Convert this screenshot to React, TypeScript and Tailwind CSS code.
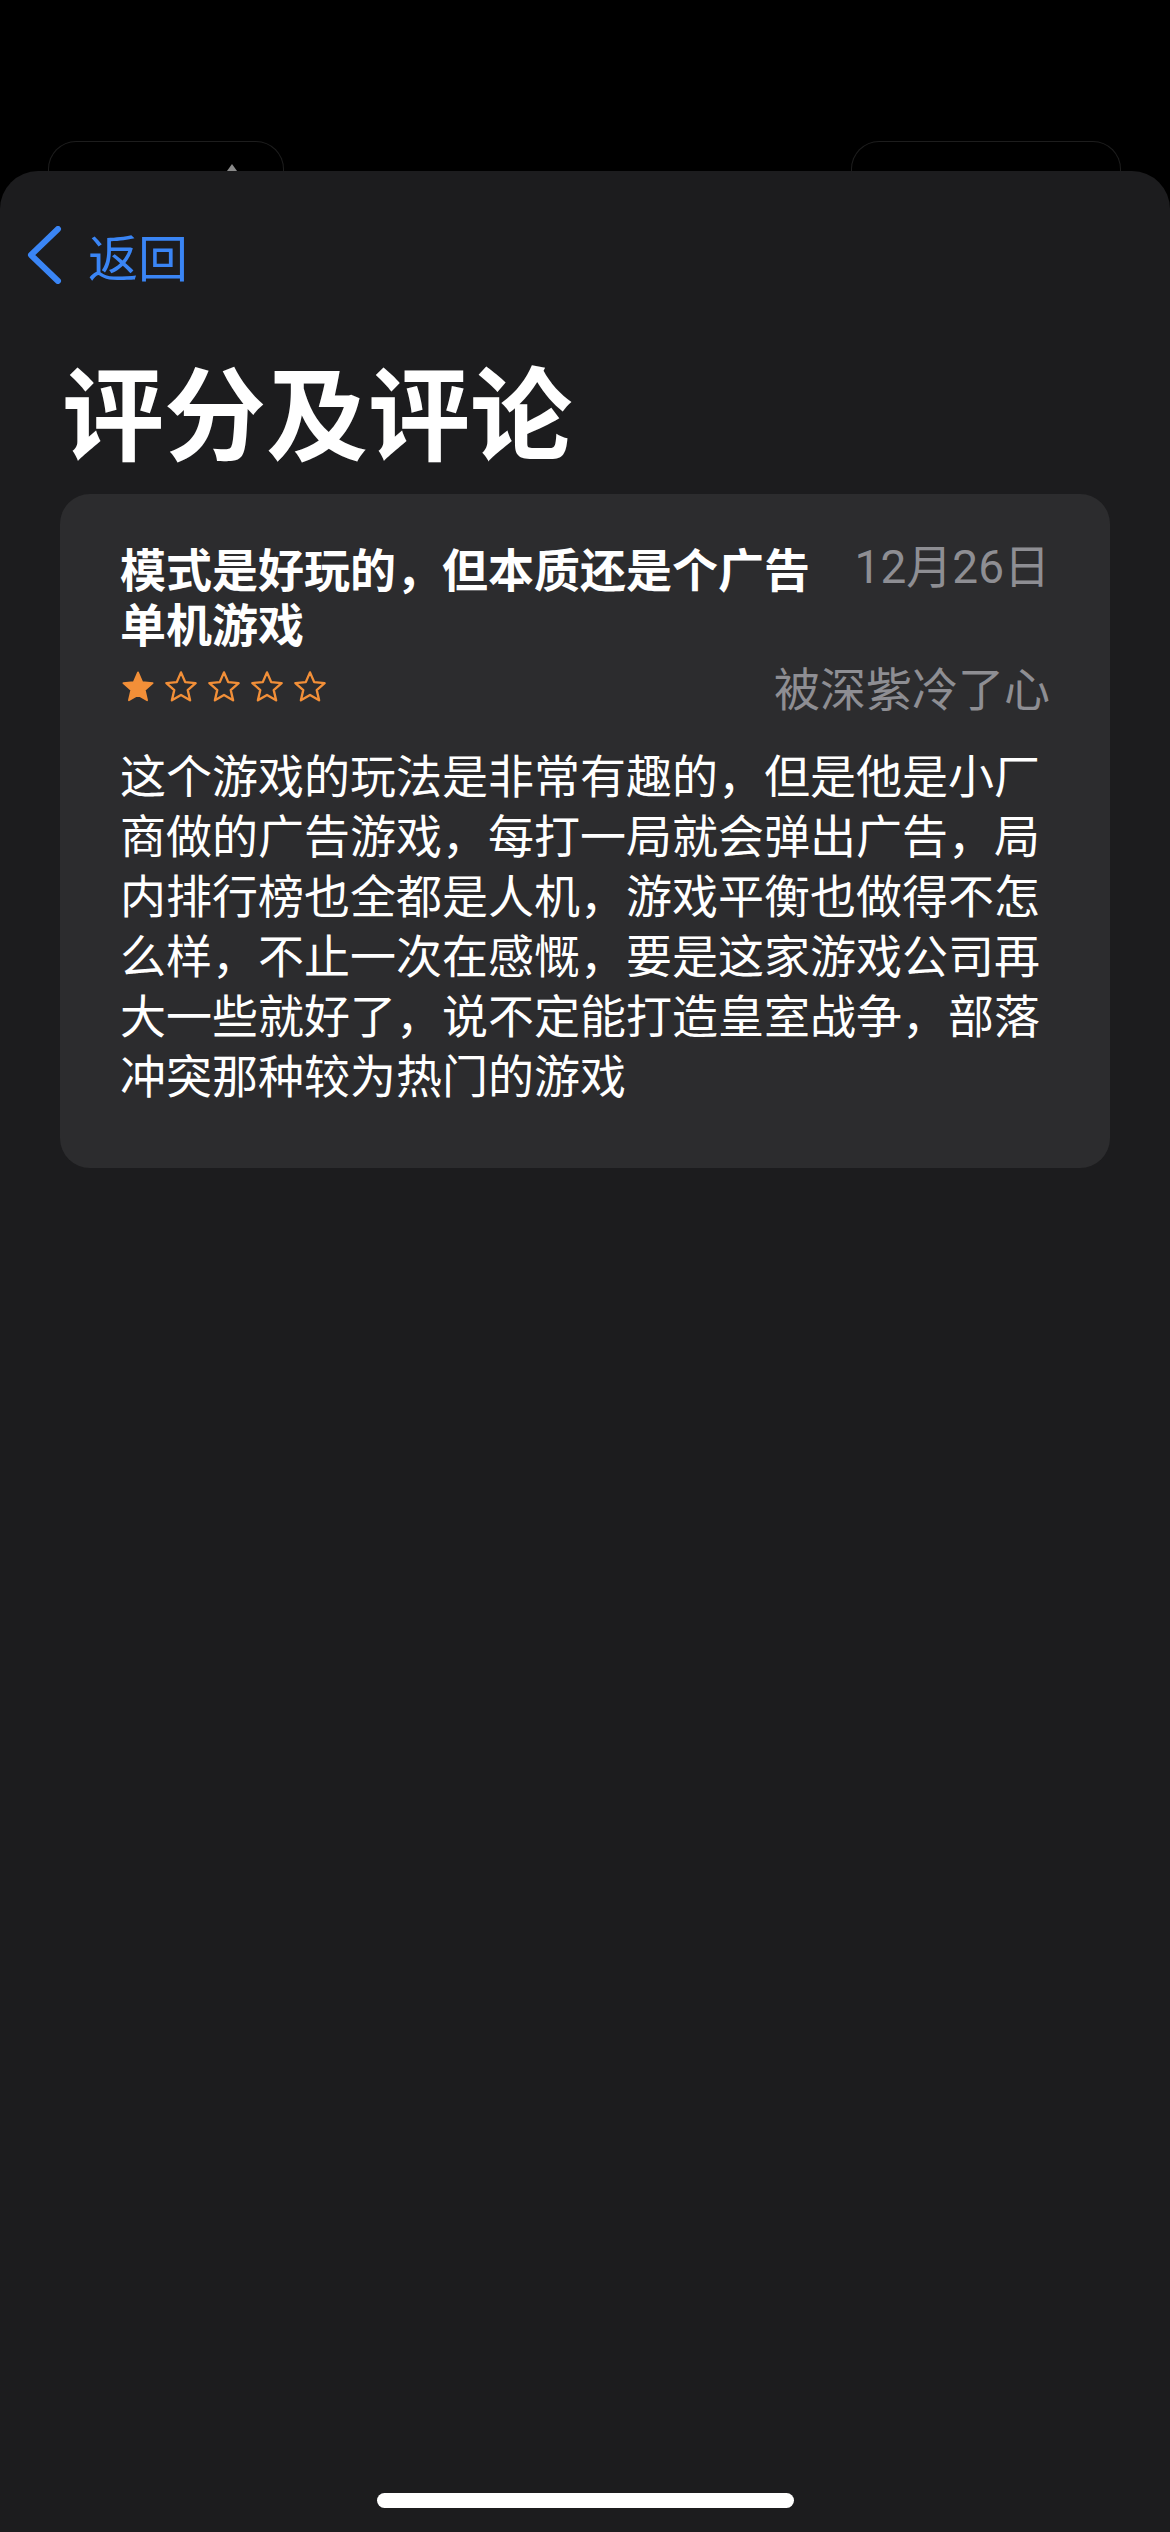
import React from "react";

const cjk = { fontFamily: '"Noto Sans CJK SC", "Noto Sans", sans-serif' };
const dateFont = { fontFamily: 'Roboto, "Noto Sans CJK SC", sans-serif' };

function Star({ filled }: { filled: boolean }) {
  return (
    <svg width="36" height="34" viewBox="0 0 24 23" className="shrink-0">
      <polygon
        points="12,1.6 14.85,8.2 21.9,8.85 16.55,13.55 18.15,20.5 12,16.85 5.85,20.5 7.45,13.55 2.1,8.85 9.15,8.2"
        fill={filled ? "#f28f38" : "none"}
        stroke="#f28f38"
        strokeWidth={filled ? 1.2 : 1.6}
        strokeLinejoin="round"
      />
    </svg>
  );
}

export default function App() {
  return (
    <div className="w-[1170px] h-[2532px] bg-black flex flex-col overflow-hidden" style={cjk}>
      {/* background buttons peeking behind the sheet */}
      <div className="h-[171px] pt-[141px] pl-[48px] pr-[49px] flex justify-between shrink-0">
        <div className="relative w-[236px] h-[30px] border-t-[1.5px] border-l-[1.5px] border-r-[1.5px] border-[#1d1d1d] rounded-t-[28px]">
          <div className="absolute left-[178px] top-[22px] w-0 h-0 border-l-[5px] border-r-[5px] border-b-[7px] border-l-transparent border-r-transparent border-b-[#8a8a8a]" />
        </div>
        <div className="w-[270px] h-[30px] border-t-[1.5px] border-l-[1.5px] border-r-[1.5px] border-[#1d1d1d] rounded-t-[28px]" />
      </div>

      {/* sheet */}
      <div className="flex-1 bg-[#1c1c1e] rounded-t-[38px] flex flex-col pt-[54px] pb-[24px]">
        {/* back */}
        <div className="h-[60px] flex items-center pl-[27px]">
          <svg width="36" height="58" viewBox="0 0 36 58" className="shrink-0">
            <polyline
              points="31,3 4,29 31,55"
              fill="none"
              stroke="#3a85f5"
              strokeWidth="6"
              strokeLinecap="round"
              strokeLinejoin="round"
            />
          </svg>
          <span className="ml-[25px] text-[50px] leading-[60px] text-[#3a85f5]">返回</span>
        </div>

        {/* title */}
        <h1 className="mt-[63px] pl-[62px] text-[102px] leading-[122px] font-bold text-white">评分及评论</h1>

        {/* review card */}
        <div className="mt-[24px] mx-[60px] bg-[#2c2c2e] rounded-[30px] px-[60px] pt-[46px] pb-[65px]">
          <div className="flex items-start justify-between">
            <div className="w-[710px] text-[46px] leading-[55px] font-bold text-white">
              模式是好玩的，但本质还是个广告单机游戏
            </div>
            <div className="shrink-0 text-[46px] leading-[55px] text-[#8e8e93]" style={dateFont}>
              12月26日
            </div>
          </div>
          <div className="mt-[9px] h-[55px] flex items-center justify-between">
            <div className="flex items-center gap-[7px]">
              <Star filled />
              <Star filled={false} />
              <Star filled={false} />
              <Star filled={false} />
              <Star filled={false} />
            </div>
            <div className="text-[46px] leading-[55px] text-[#8e8e93]">被深紫冷了心</div>
          </div>
          <p className="mt-[29px] text-[46px] leading-[60px] text-white">
            这个游戏的玩法是非常有趣的，但是他是小厂商做的广告游戏，每打一局就会弹出广告，局内排行榜也全都是人机，游戏平衡也做得不怎么样，不止一次在感慨，要是这家游戏公司再大一些就好了，说不定能打造皇室战争，部落冲突那种较为热门的游戏
          </p>
        </div>

        {/* home indicator */}
        <div className="mt-auto mx-auto w-[417px] h-[15px] rounded-full bg-white" />
      </div>
    </div>
  );
}
